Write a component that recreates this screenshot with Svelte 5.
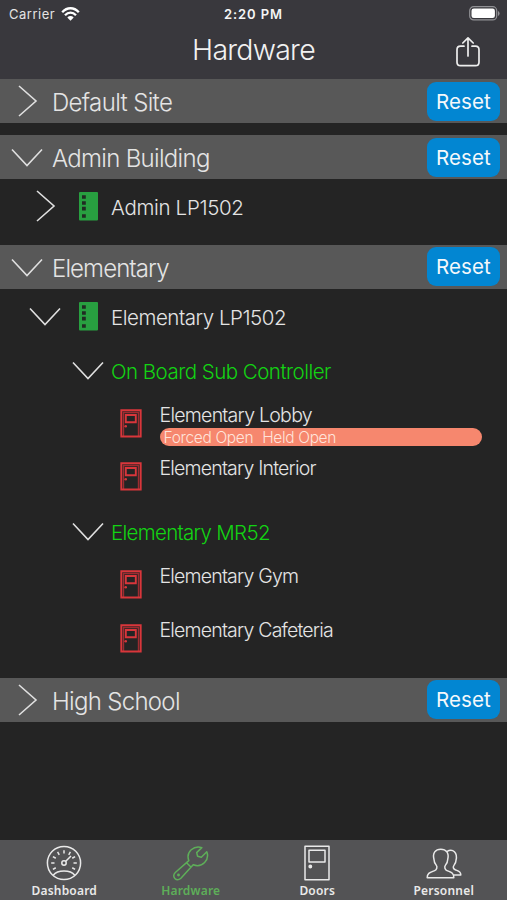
<script>
  const sites = [
    { name: 'Default Site', open: false, spacing: -0.65, rows: [] },
    { name: 'Admin Building', open: true, spacing: -0.7, rows: [{ kind: 'controller', name: 'Admin LP1502', open: false, spacing: -0.32 }] },
    {
      name: 'Elementary', open: true, spacing: -0.9,
      rows: [
        { kind: 'controller', name: 'Elementary LP1502', open: true, spacing: -0.47 },
        { kind: 'sub', name: 'On Board Sub Controller', open: true, spacing: -0.52 },
        { kind: 'door', name: 'Elementary Lobby', spacing: -0.73, alarms: ['Forced Open', 'Held Open'] },
        { kind: 'door', name: 'Elementary Interior', spacing: -0.8 },
        { kind: 'sub', name: 'Elementary MR52', open: true, spacing: -0.7 },
        { kind: 'door', name: 'Elementary Gym', spacing: -0.8 },
        { kind: 'door', name: 'Elementary Cafeteria', spacing: -0.8 }
      ]
    },
    { name: 'High School', open: false, spacing: -0.7, rows: [] }
  ];
  const tabs = ['Dashboard', 'Hardware', 'Doors', 'Personnel'];
  const ticks = [-120, -90, -60, -30, 0, 30, 60, 90, 120];
</script>

{#snippet chevron(open)}
  <svg class="chevron" width="34" height="34" viewBox="0 0 34 34">
    <path d={open ? 'M2 9.5L17 25.5L32 9.5' : 'M9 2L26 17L9 32'} />
  </svg>
{/snippet}

<div class="app">
  <header>
    <div class="status">
      <div class="carrier">
        <span>Carrier</span>
        <svg width="19" height="14" viewBox="0 0 19 14">
          <path d="M1.2 5.2C6-.1 13-.1 17.8 5.2M4 8.2c3.3-3.5 7.700-3.500 11 0" fill="none" stroke="#fff" stroke-width="2.300" />
          <path d="M6.300 10.500q3.200-2.900 6.400 0L9.500 13.700z" fill="#fff" />
        </svg>
      </div>
      <div class="time">2:20 PM</div>
      <svg class="battery" width="31" height="15" viewBox="0 0 31 15">
        <rect x=".7" y=".7" width="27" height="13.200" rx="4" fill="none" stroke="#919195" stroke-width="1.200" />
        <rect x="2.500" y="2.500" width="23.400" height="9.600" rx="2.300" fill="#fff" />
        <path d="M29 5v5q1.600-.8 1.600-2.500T29 5" fill="#919195" />
      </svg>
    </div>
    <div class="nav">
      <h1>Hardware</h1>
      <svg class="share" width="26" height="32" viewBox="0 0 26 32">
        <path d="M9 10.200H5.500Q2 10.200 2 13.700v12.600q0 3.400 3.500 3.400h15q3.500 0 3.500-3.400V13.700q0-3.500-3.500-3.500H17M13 20V2M7.800 7L13 1.800 18.200 7" />
      </svg>
    </div>
  </header>

  <main>
    {#each sites as site}
      <section>
        <div class="site">
          {@render chevron(site.open)}
          <h2 style="letter-spacing: {site.spacing}px">{site.name}</h2>
          <button>Reset</button>
        </div>
        {#each site.rows as row}
          <div class="row {row.kind}">
            {#if row.kind === 'door'}
              <svg class="door-icon" width="22" height="29" viewBox="0 0 22 29">
                <path d="M3.500 27V3.500h15V27" stroke="#9c2c31" stroke-width="1.400" />
                <path d="M1.300 1.300h19.400v26.200H1.300zM5.800 6h10v7.300h-10z" />
                <circle cx="5.700" cy="17.200" r="1.300" fill="#d9363b" stroke="none" />
              </svg>
              <div class="info">
                <span class="label" style="letter-spacing: {row.spacing}px">{row.name}</span>
                {#if row.alarms}
                  <div class="alarms">{#each row.alarms as alarm}<span>{alarm}</span>{/each}</div>
                {/if}
              </div>
            {:else}
              {@render chevron(row.open)}
              {#if row.kind === 'controller'}
                <svg class="board" width="19" height="29" viewBox="0 0 19 29">
                  <rect width="19" height="28.500" rx="1" fill="#289f40" />
                  <path d="M3 3.200h3.800v3.600H3zM3 9.200h3.800v3.600H3zM3 14.800h3.800v3.600H3zM3 22.200h3.800v3.600H3z" fill="#202b22" />
                </svg>
              {/if}
              <span class="label" style="letter-spacing: {row.spacing}px">{row.name}</span>
            {/if}
          </div>
        {/each}
      </section>
    {/each}
  </main>

  <footer>
    {#each tabs as tab, i}
      <div class="tab" class:active={i === 1}>
        <svg width="36" height="36" viewBox="0 0 36 36">
          {#if i === 0}
            <circle cx="18" cy="18" r="16.600" />
            <path d="M7.200 30.200Q10.500 26 18 26t10.800 4.200M19.500 16.500L25 11" />
            <circle cx="18" cy="18" r="2.200" />
            {#each ticks as angle}
              <path d="M18 5.200v3.300" transform="rotate({angle} 18 18)" />
            {/each}
          {:else if i === 1}
            <path d="M28.800 2.600Q23 .6 18.200 4.700C14.600 8 14.500 12 15.800 15.600L2.300 27.500c-4.300 4.200 1.200 9.700 5.600 5.700L20.200 19.800c4.100 1.500 8.200 1 11.400-2.300 3.300-3.300 3.500-7.100 2.200-10.700L28.300 12.200l-3.700-.9-.9-3.700zM13.800 18L17.900 22" />
            <circle cx="5.500" cy="30" r=".7" />
          {:else if i === 2}
            <path d="M6 1.200h24v33.600H6zM10 5.300h16v11.800H10z" />
            <circle cx="11.300" cy="21.500" r="1.200" fill="currentColor" />
          {:else}
            <path d="M1.200 32.800c0-4.900 2.800-5.400 7.500-7.200 2-.8 3-3.600 1.500-5.500-1.700-2.100-2.200-3.500-2.200-5.600C6.200 8 9.500 4.200 14.800 4.200S23.400 8 21.700 14.500c0 2.100-.5 3.500-2.200 5.600-1.500 1.900-.5 4.700 1.500 5.500 4.700 1.800 6.800 2.300 6.800 7.200zM20.800 6.600C27 2.800 31.800 8 30 15.200c0 2-.4 3-1.900 4.900-1.400 1.800-1 3.700 1.100 4.600 3.800 1.600 5.600 2 5.600 5.400h-7.200" />
          {/if}
        </svg>
        <span>{tab}</span>
      </div>
    {/each}
  </footer>
</div>

<style>
  :global(body) { background: #242424; }
  .app {
    display: flex;
    flex-direction: column;
    width: 507px;
    height: 900px;
    overflow: hidden;
    background: #242424;
    color: #e4e4e4;
    font-family: Inter, "Liberation Sans", sans-serif;
    font-weight: 300;
  }
  svg { display: block; flex: none; }
  header { flex: none; height: 79px; background: #39383d; }
  .status, .nav { display: grid; grid-template-columns: 1fr auto 1fr; align-items: center; }
  .status { height: 27px; padding: 0 7px 0 9px; font-size: 13px; font-weight: 400; }
  .carrier { display: flex; gap: 6px; align-items: center; letter-spacing: 0.5px; }
  .time { margin-right: 2px; font-weight: 600; color: #f5f5f5; letter-spacing: 0.9px; }
  .battery { justify-self: end; }
  .nav { height: 46px; padding-right: 26px; padding-left: 26px; }
  h1 { grid-column: 2; margin: -2px 0 0; font-size: 28.500px; font-weight: 300; letter-spacing: -0.75px; color: #f1f1f1; }
  .share { justify-self: end; margin-top: 3px; fill: none; stroke: #eee; stroke-width: 1.700; stroke-linejoin: round; stroke-linecap: round; }
  main { flex: 1; min-height: 0; }
  section { margin-bottom: 12px; }
  .site { display: flex; align-items: center; height: 44px; padding: 0 7px 0 10px; background: #585858; }
  .chevron { fill: none; stroke: #e0e0e0; stroke-width: 1.600; }
  h2 { flex: 1; margin: 3px 0 0 8px; font-size: 24px; font-weight: 300; }
  button {
    width: 73px; height: 39px; padding: 0; border: 0; border-radius: 9px;
    background: #0286d2; color: #f4f8fb; font: 400 20.500px Inter, sans-serif; letter-spacing: 0.1px;
  }
  .row { display: flex; align-items: center; height: 53.850px; font-size: 20.500px; }
  .row > .label { margin-top: 3px; }
  .controller { padding-left: 28px; }
  .board { margin: 2px 13px 0 17px; }
  .sub { padding-left: 71px; color: #13d313; }
  .sub .label { margin-left: 6px; }
  .door { padding-left: 119.500px; align-items: flex-start; }
  .door-icon { margin-top: 12px; fill: none; stroke: #d9363b; stroke-width: 1.900; }
  .info { width: 322.500px; margin-left: 18px; padding-top: 5px; font-size: 19.500px; }
  .info .label { display: block; line-height: 26px; }
  .alarms {
    display: flex; gap: 9px; align-items: center; height: 16px; padding: 2px 0 0 4px;
    border-radius: 9px; background: #f6876e; color: #ffe4db; font-size: 15.500px; letter-spacing: -0.35px;
  }
  footer { display: flex; flex: none; height: 60px; padding-left: 1px; background: #535355; }
  .tab { display: flex; flex-direction: column; align-items: center; width: 126.500px; padding-top: 5px; color: #e9e9e9; }
  .tab svg { fill: none; stroke: currentColor; stroke-width: 1.500; stroke-linejoin: round; }
  .tab span { margin-top: 1px; font: 600 12px/17px "Noto Sans", "Open Sans", sans-serif; letter-spacing: 0.2px; }
  .active { color: #5eae59; }
</style>
